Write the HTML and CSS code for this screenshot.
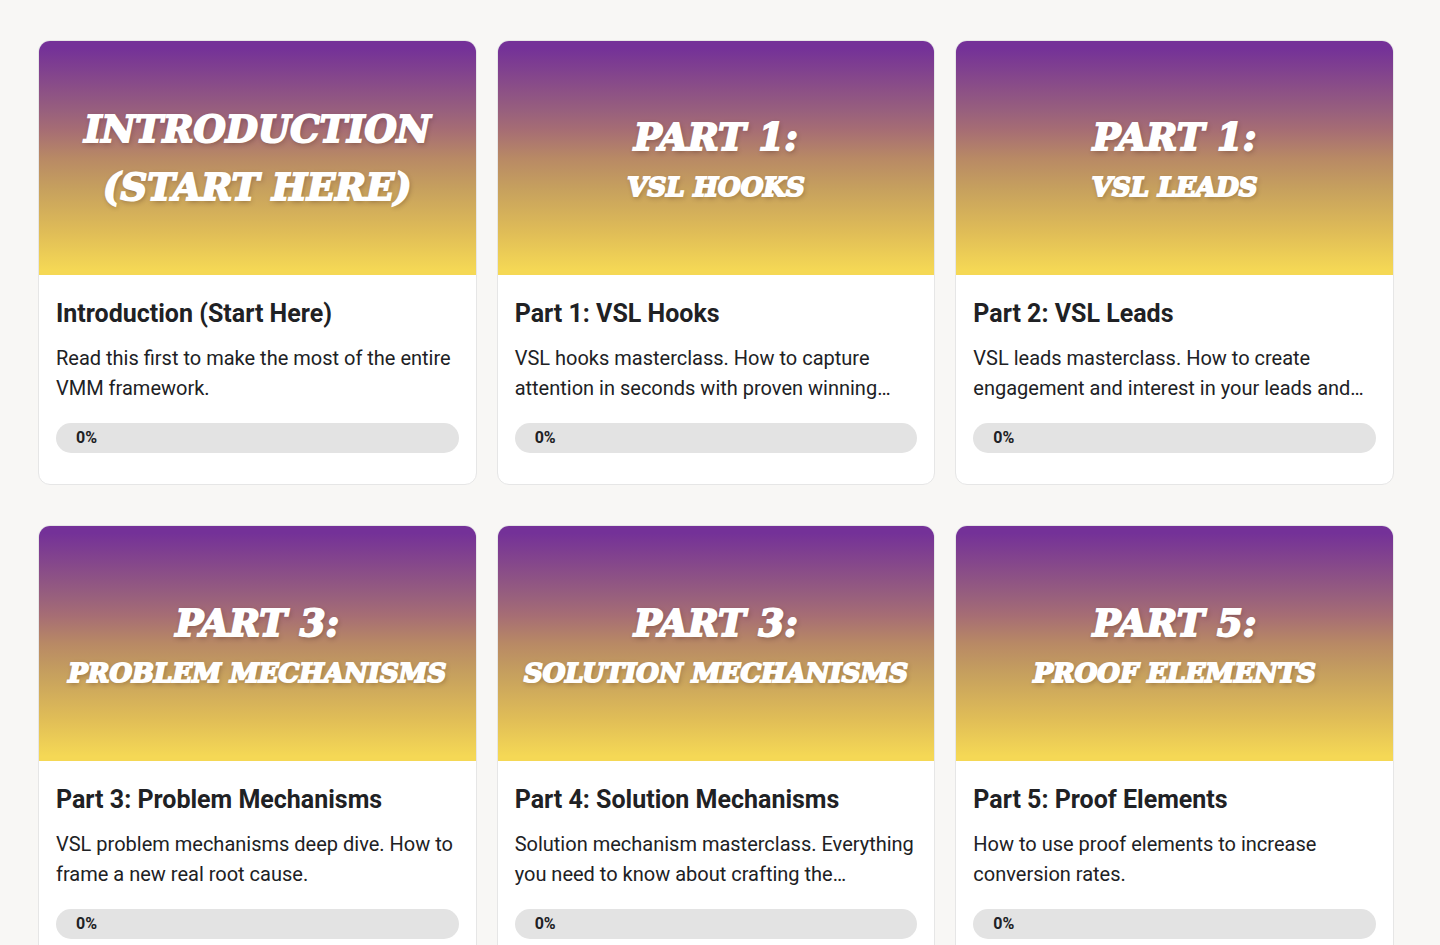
FILE: index.html
```html
<!DOCTYPE html>
<html lang="en">
<head>
  <meta charset="UTF-8">
  <meta name="viewport" content="width=device-width, initial-scale=1.0">
  <title>VMM Framework</title>
  <link rel="stylesheet" href="styles.css">
</head>
<body>
  <main class="courses">
    <a class="card" href="#introduction">
      <div class="banner">
        <span class="banner-title">INTRODUCTION</span>
        <span class="banner-title">(START HERE)</span>
      </div>
      <div class="card-body">
        <h2>Introduction (Start Here)</h2>
        <p>Read this first to make the most of the entire VMM framework.</p>
        <div class="progress" role="progressbar" aria-valuenow="0" aria-valuemin="0" aria-valuemax="100">0%</div>
      </div>
    </a>

    <a class="card" href="#hooks">
      <div class="banner">
        <span class="banner-title">PART 1:</span>
        <span class="banner-subtitle">VSL HOOKS</span>
      </div>
      <div class="card-body">
        <h2>Part 1: VSL Hooks</h2>
        <p>VSL hooks masterclass. How to capture attention in seconds with proven winning…</p>
        <div class="progress" role="progressbar" aria-valuenow="0" aria-valuemin="0" aria-valuemax="100">0%</div>
      </div>
    </a>

    <a class="card" href="#leads">
      <div class="banner">
        <span class="banner-title">PART 1:</span>
        <span class="banner-subtitle">VSL LEADS</span>
      </div>
      <div class="card-body">
        <h2>Part 2: VSL Leads</h2>
        <p>VSL leads masterclass. How to create engagement and interest in your leads and…</p>
        <div class="progress" role="progressbar" aria-valuenow="0" aria-valuemin="0" aria-valuemax="100">0%</div>
      </div>
    </a>

    <a class="card" href="#problem-mechanisms">
      <div class="banner">
        <span class="banner-title">PART 3:</span>
        <span class="banner-subtitle">PROBLEM MECHANISMS</span>
      </div>
      <div class="card-body">
        <h2>Part 3: Problem Mechanisms</h2>
        <p>VSL problem mechanisms deep dive. How to frame a new real root cause.</p>
        <div class="progress" role="progressbar" aria-valuenow="0" aria-valuemin="0" aria-valuemax="100">0%</div>
      </div>
    </a>

    <a class="card" href="#solution-mechanisms">
      <div class="banner">
        <span class="banner-title">PART 3:</span>
        <span class="banner-subtitle">SOLUTION MECHANISMS</span>
      </div>
      <div class="card-body">
        <h2>Part 4: Solution Mechanisms</h2>
        <p>Solution mechanism masterclass. Everything you need to know about crafting the…</p>
        <div class="progress" role="progressbar" aria-valuenow="0" aria-valuemin="0" aria-valuemax="100">0%</div>
      </div>
    </a>

    <a class="card" href="#proof-elements">
      <div class="banner">
        <span class="banner-title">PART 5:</span>
        <span class="banner-subtitle">PROOF ELEMENTS</span>
      </div>
      <div class="card-body">
        <h2>Part 5: Proof Elements</h2>
        <p>How to use proof elements to increase conversion rates.</p>
        <div class="progress" role="progressbar" aria-valuenow="0" aria-valuemin="0" aria-valuemax="100">0%</div>
      </div>
    </a>
  </main>
</body>
</html>
```
FILE: styles.css
```css
* {
  box-sizing: border-box;
}
body {
  margin: 0;
  background-color: #f8f7f5;
  color: #202124;
  font-family: Roboto, sans-serif;
}
.courses {
  display: grid;
  grid-template-columns: repeat(3, 1fr);
  gap: 40px 20px;
  padding: 40px 46px 40px 38px;
}
.card {
  display: block;
  background-color: #fff;
  border: 1px solid #e6e6e6;
  border-radius: 12px;
  overflow: hidden;
  color: inherit;
  text-decoration: none;
}
.banner {
  display: flex;
  flex-direction: column;
  align-items: center;
  justify-content: center;
  aspect-ratio: 436 / 234;
  background: linear-gradient(#743198 0%, #743198 3%, #98607d 30%, #a66d74 38%, #b88965 50%, #c6a05e 63%, #e0bd57 82%, #f5d855 98%);
  color: #fff;
  font-family: "DejaVu Serif", serif;
  font-weight: bold;
  font-style: italic;
  text-shadow: 1px 2px 5px rgba(60, 30, 20, 0.4);
  -webkit-text-stroke: 2px #fff;
  white-space: nowrap;
}
.banner-title {
  font-size: 37px;
  line-height: 58px;
}
.banner-subtitle {
  font-size: 26px;
  line-height: 42px;
}
.card-body {
  padding: 24px 17px 31px;
}
.card-body h2 {
  margin: 0 0 14px;
  font-size: 25px;
  line-height: 30px;
  font-weight: 700;
}
.card-body p {
  margin: 0 0 20px;
  font-size: 20px;
  line-height: 30px;
}
.progress {
  height: 30px;
  padding: 0 20px;
  border-radius: 15px;
  background-color: #e3e3e3;
  font-size: 16px;
  line-height: 30px;
  font-weight: 700;
}
```
